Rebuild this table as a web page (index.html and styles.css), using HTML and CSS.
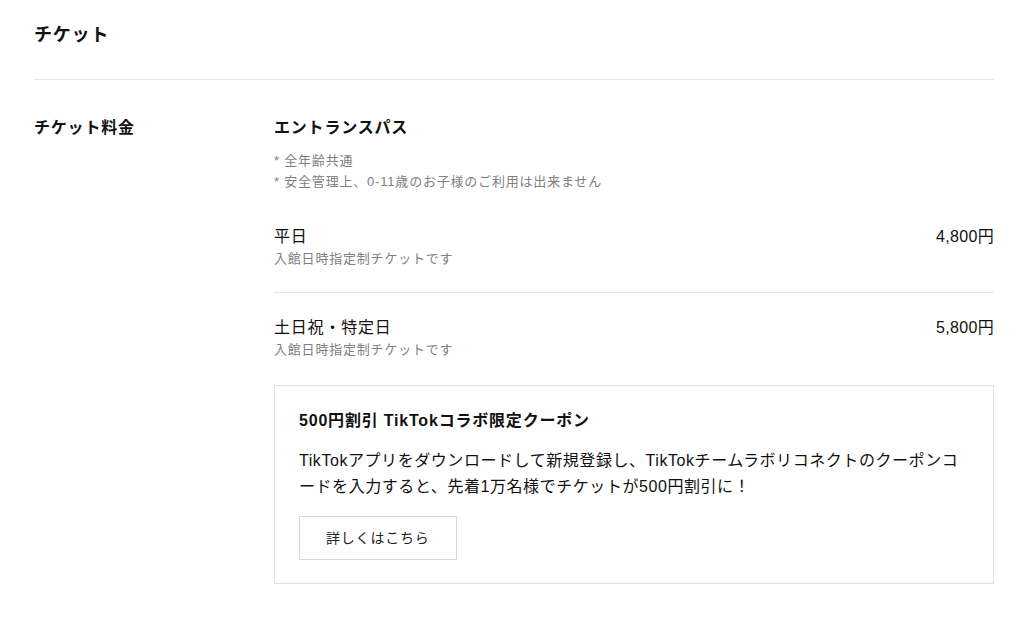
FILE: index.html
```html
<!DOCTYPE html>
<html lang="ja">
<head>
<meta charset="utf-8">
<link rel="stylesheet" href="styles.css">
</head>
<body>
<div class="page">
  <h1 class="page-title">チケット</h1>
  <div class="row">
    <div class="label">チケット料金</div>
    <div class="content">
      <h2 class="pass-title">エントランスパス</h2>
      <ul class="notes">
        <li>* 全年齢共通</li>
        <li>* 安全管理上、0-11歳のお子様のご利用は出来ません</li>
      </ul>
      <div class="price-item first">
        <div class="price-info">
          <div class="price-name">平日</div>
          <div class="price-sub">入館日時指定制チケットです</div>
        </div>
        <div class="price-value">4,800円</div>
      </div>
      <div class="price-item second">
        <div class="price-info">
          <div class="price-name">土日祝・特定日</div>
          <div class="price-sub">入館日時指定制チケットです</div>
        </div>
        <div class="price-value">5,800円</div>
      </div>
      <div class="coupon">
        <div class="coupon-title">500円割引 TikTokコラボ限定クーポン</div>
        <p class="coupon-body">TikTokアプリをダウンロードして新規登録し、TikTokチームラボリコネクトのクーポンコードを入力すると、先着1万名様でチケットが500円割引に！</p>
        <a class="coupon-btn" href="#">詳しくはこちら</a>
      </div>
    </div>
  </div>
</div>
</body>
</html>
```
FILE: styles.css
```css
* { box-sizing: border-box; }
html, body { margin: 0; padding: 0; background: #fff; }
body {
  font-family: "Liberation Sans", "Noto Sans CJK JP", sans-serif;
  color: #111;
  letter-spacing: 0.05em;
}
.page {
  padding: 0 30px 0 34px;
}
.page-title {
  margin: 0;
  font-size: 18px;
  line-height: 27px;
  font-weight: bold;
  padding: 22px 0 30px;
  border-bottom: 1px solid #e6e6e6;
}
.row {
  display: flex;
  padding-top: 36px;
}
.label {
  width: 240px;
  flex: none;
  font-size: 16px;
  line-height: 24px;
  font-weight: bold;
}
.content {
  flex: 1;
}
.pass-title {
  margin: 0;
  font-size: 16px;
  line-height: 24px;
  font-weight: bold;
}
.notes {
  list-style: none;
  margin: 10px 0 0;
  padding: 0;
  font-size: 13px;
  line-height: 21px;
  color: #808080;
}
.price-item {
  display: flex;
  justify-content: space-between;
  align-items: flex-start;
}
.price-item.first {
  margin-top: 33px;
  padding-bottom: 23px;
  border-bottom: 1px solid #e6e6e6;
}
.price-item.second {
  padding-top: 23px;
}
.price-name, .price-value {
  font-size: 16px;
  line-height: 24px;
}
.price-value { letter-spacing: 0.02em; }
.price-sub {
  font-size: 13px;
  line-height: 20px;
  color: #808080;
}
.coupon {
  margin-top: 25px;
  border: 1px solid #e0e0e0;
  padding: 23px 24px 23px;
}
.coupon-title {
  font-size: 16px;
  line-height: 24px;
  font-weight: bold;
}
.coupon-body {
  margin: 15px 0 0;
  font-size: 16px;
  line-height: 26px;
  letter-spacing: 0.035em;
}
.coupon-btn {
  display: inline-block;
  margin-top: 16px;
  border: 1px solid #d8d8d8;
  padding: 0 26px;
  height: 44px;
  line-height: 42px;
  font-size: 14px;
  color: #222;
  text-decoration: none;
}
```
